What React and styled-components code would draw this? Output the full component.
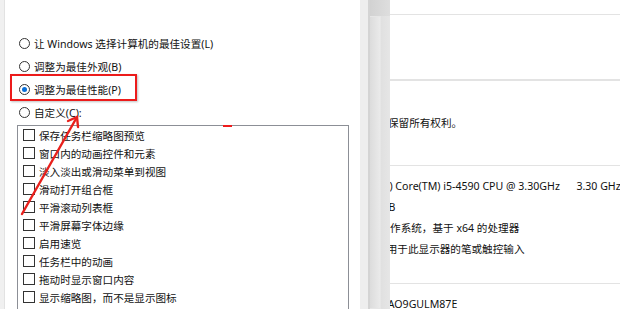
import React from 'react'
import styled, { createGlobalStyle } from 'styled-components'

const GlobalStyle = createGlobalStyle`
  html, body {
    margin: 0;
    padding: 0;
    background: #ffffff;
  }
  body {
    font-family: "Noto Sans", "Noto Sans CJK SC", sans-serif;
    color: #111111;
  }
`

const Screen = styled.div`
  position: relative;
  display: flex;
  width: 620px;
  height: 309px;
  overflow: hidden;
  background: #ffffff;
`

const EdgeStrip = styled.div`
  width: 4px;
  flex: none;
  background: #f0f0f0;
  border-right: 1px solid #e2e2e2;
`

const Dialog = styled.div`
  width: 355px;
  flex: none;
  display: flex;
  flex-direction: column;
  padding-left: 12px;
  box-sizing: border-box;
  background: #ffffff;
  font-size: 10.6px;
`

const Title = styled.div`
  height: 2px;
  overflow: hidden;
  padding-left: 6px;
  white-space: nowrap;
  line-height: 14px;
  & > span {
    display: block;
    margin-top: -10px;
  }
`

const RadioGroup = styled.div`
  display: flex;
  flex-direction: column;
  margin-top: 32px;
`

const RadioRow = styled.div`
  position: relative;
  display: flex;
  align-items: center;
  gap: 4px;
  height: 23px;
  padding-left: 2px;
  white-space: nowrap;
`

const RadioDot = styled.span`
  width: 11px;
  height: 11px;
  flex: none;
  border-radius: 50%;
  border: 1px solid #333333;
  box-sizing: border-box;
  display: flex;
  align-items: center;
  justify-content: center;
  &::after {
    content: '';
    width: 5px;
    height: 5px;
    border-radius: 50%;
    background: ${p => (p.checked ? '#0a6fd8' : 'transparent')};
  }
`

const Highlight = styled.span`
  position: absolute;
  left: -7px;
  top: -4px;
  width: 127px;
  height: 27px;
  border: 2px solid #ec1b1b;
  box-sizing: border-box;
  box-shadow: 1px 1px 2px rgba(0, 0, 0, 0.25);
  pointer-events: none;
`

const ListBox = styled.div`
  width: 332px;
  flex: 1;
  margin-top: 1px;
  border: 1px solid #8c8f96;
  border-bottom: none;
  box-sizing: border-box;
  display: flex;
  flex-direction: column;
`

const CheckRow = styled.div`
  display: flex;
  align-items: center;
  gap: 4px;
  height: 18px;
  padding-left: 5px;
  white-space: nowrap;
`

const CheckBox = styled.span`
  width: 12px;
  height: 12px;
  flex: none;
  border: 1px solid #333333;
  box-sizing: border-box;
`

const Frame = styled.div`
  width: 30px;
  flex: none;
  display: flex;
`

const FrameEdge = styled.div`
  width: 8px;
  background: #eeeeee;
  border-right: 2px solid #d4d4d4;
`

const FrameBody = styled.div`
  flex: 1;
  display: flex;
  flex-direction: column;
  background: linear-gradient(to right, #d9d9d9, #e6e6e6);
`

const FrameCap = styled.div`
  height: 16px;
  background: linear-gradient(to right, #d2d2d2, #dedede);
`

const FrameInset = styled.div`
  flex: 1;
  margin-right: 9px;
  border: 1px solid #e6e6e6;
  border-left: none;
  background: linear-gradient(to right, #dcdcdc, #eaeaea);
`

const InfoPanel = styled.div`
  flex: 1;
  display: flex;
  flex-direction: column;
  overflow: hidden;
  font-size: 10.6px;
`

const Rule = styled.div`
  height: ${p => p.thick ? 2 : 1}px;
  margin-top: ${p => p.gap}px;
  background: #e3e3e3;
  flex: none;
`

const InfoLine = styled.div`
  height: 21px;
  line-height: 21px;
  margin-top: ${p => p.gap || 0}px;
  white-space: nowrap;
  text-indent: ${p => p.shift || 0}px;
  flex: none;
`

const Annotation = styled.svg`
  position: absolute;
  left: 0;
  top: 0;
  pointer-events: none;
`

const effects = [
  '保存任务栏缩略图预览',
  '窗口内的动画控件和元素',
  '淡入淡出或滑动菜单到视图',
  '滑动打开组合框',
  '平滑滚动列表框',
  '平滑屏幕字体边缘',
  '启用速览',
  '任务栏中的动画',
  '拖动时显示窗口内容',
  '显示缩略图，而不是显示图标',
  '显示亚透明的选择长方形'
]

const App = () => (
  <Screen>
    <GlobalStyle />
    <EdgeStrip />
    <Dialog>
      <Title><span>选择你想在此计算机上使用的 Windows 外观和性能设置。</span></Title>
      <RadioGroup>
        <RadioRow><RadioDot />让 Windows 选择计算机的最佳设置(L)</RadioRow>
        <RadioRow><RadioDot />调整为最佳外观(B)</RadioRow>
        <RadioRow><RadioDot checked />调整为最佳性能(P)<Highlight /></RadioRow>
        <RadioRow><RadioDot />自定义(C):</RadioRow>
      </RadioGroup>
      <ListBox>
        {effects.map(label => (
          <CheckRow key={label}><CheckBox />{label}</CheckRow>
        ))}
      </ListBox>
    </Dialog>
    <Frame>
      <FrameEdge />
      <FrameBody>
        <FrameCap />
        <FrameInset />
      </FrameBody>
    </Frame>
    <InfoPanel>
      <Rule gap={14} />
      <Rule gap={64} thick />
      <InfoLine gap={32} shift={-2}>保留所有权利。</InfoLine>
      <Rule gap={31} />
      <InfoLine gap={10} shift={-33}>Intel(R) Core(TM) i5-4590 CPU @ 3.30GHz&nbsp;&nbsp;&nbsp;&nbsp;&nbsp;&nbsp;3.30 GHz</InfoLine>
      <InfoLine shift={-33}>8.00 GB</InfoLine>
      <InfoLine shift={-36}>64 位操作系统，基于 x64 的处理器</InfoLine>
      <InfoLine shift={-35}>没有可用于此显示器的笔或触控输入</InfoLine>
      <Rule gap={23} />
      <InfoLine gap={10} shift={-52}>DESKTOP-AO9GULM87E</InfoLine>
    </InfoPanel>
    <Annotation width="620" height="309" viewBox="0 0 620 309">
      <g stroke="#e8201c" strokeWidth="2.4" strokeLinecap="round" fill="none">
        <line x1="22" y1="214" x2="77" y2="117" />
        <polyline points="68,121 77,117 78,127" />
      </g>
      <rect x="223" y="125" width="9" height="2" fill="#ee1c1c" />
    </Annotation>
  </Screen>
)

export default App
